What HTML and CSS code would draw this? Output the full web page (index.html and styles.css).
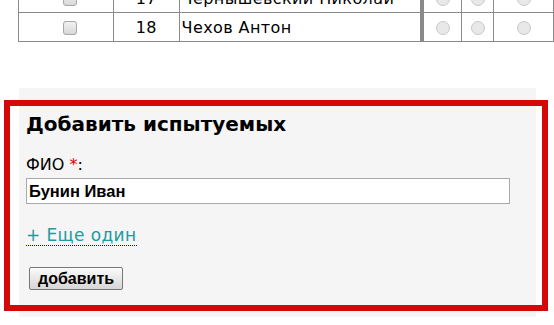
FILE: index.html
```html
<!DOCTYPE html>
<html lang="ru">
<head>
  <meta charset="UTF-8" />
  <title>Испытуемые</title>
  <link rel="stylesheet" href="styles.css">
</head>
<body>
  <table class="people">
    <tr>
      <td class="col-check"><span class="check"></span></td>
      <td class="col-num">17</td>
      <td class="col-name">Чернышевский Николай</td>
      <td class="col-radio first"><span class="radio"></span></td>
      <td class="col-radio second"><span class="radio"></span></td>
      <td class="col-radio last"><span class="radio"></span></td>
    </tr>
    <tr>
      <td class="col-check"><span class="check"></span></td>
      <td class="col-num">18</td>
      <td class="col-name">Чехов Антон</td>
      <td class="col-radio first"><span class="radio"></span></td>
      <td class="col-radio second"><span class="radio"></span></td>
      <td class="col-radio last"><span class="radio"></span></td>
    </tr>
  </table>

  <div class="add-block">
    <div class="highlight"></div>
    <h2>Добавить испытуемых</h2>
    <form class="add-form">
      <label class="field-label">ФИО <span class="req">*</span>:</label>
      <input type="text" class="field-input" value="Бунин Иван">
      <a href="#" class="more-link">+ Еще один</a>
      <button type="button" class="add-button">добавить</button>
    </form>
  </div>
</body>
</html>
```

FILE: styles.css
```css
body {
  margin: 0;
  font-family: "DejaVu Sans", Verdana, sans-serif;
  background-color: #fff;
  color: #000;
  overflow: hidden;
}

.people {
  border-collapse: collapse;
  margin: -17px 0 0 18px;
  font-size: 16px;
  letter-spacing: 0.4px;
}

.people td {
  border: 1px solid #8a8a8a;
  height: 28px;
  padding: 0;
}

.col-check {
  width: 88px;
  text-align: center;
  padding-left: 8px !important;
}

.col-num {
  width: 66px;
  text-align: center;
}

.col-name {
  width: 242px;
  padding-left: 2px !important;
}

.col-radio {
  text-align: center;
}

.col-radio.first {
  width: 37px;
  border-left: 4px solid #8a8a8a;
}

.col-radio.second {
  width: 32px;
}

.col-radio.last {
  width: 60px;
}

.check {
  display: inline-block;
  width: 12px;
  height: 12px;
  border: 1px solid #a8a8a8;
  border-radius: 3px;
  background: linear-gradient(#f2f2f2, #d8d8d8);
  vertical-align: middle;
}

.radio {
  display: inline-block;
  width: 12px;
  height: 12px;
  border: 1px solid #c8c8c8;
  border-radius: 50%;
  background: #e8e8e8;
  vertical-align: middle;
}

.add-block {
  position: relative;
  margin: 46px 18px 0 19px;
  height: 229px;
  background-color: #f5f5f5;
  padding: 0 7px;
}

.highlight {
  position: absolute;
  left: -15px;
  top: 12px;
  width: 532px;
  height: 199px;
  border: 6px solid #d50808;
  pointer-events: none;
}

h2 {
  margin: 0;
  padding-top: 24px;
  font-size: 20px;
  font-weight: bold;
  line-height: 24px;
}

.add-form {
  display: flex;
  flex-direction: column;
  align-items: flex-start;
}

.field-label {
  margin-top: 19px;
  font-size: 16px;
  line-height: 20px;
}

.req {
  color: #e00000;
}

.field-input {
  margin-top: 3px;
  width: 478px;
  height: 22px;
  padding: 1px 2px;
  border: 1px solid #aaa;
  background: #fff;
  font-family: "Liberation Sans", Arial, sans-serif;
  font-weight: bold;
  font-size: 16.5px;
  color: #000;
  box-sizing: content-box;
}

.more-link {
  margin-top: 21px;
  font-size: 17px;
  line-height: 20px;
  letter-spacing: 0.4px;
  color: #239a9e;
  text-decoration: none;
  border-bottom: 1px dotted #0000ee;
}

.add-button {
  margin: 21px 0 0 3px;
  height: 23px;
  padding: 0 8px;
  border: 1px solid #777;
  border-radius: 2px;
  background: linear-gradient(#fafafa, #d6d6d6);
  font-family: "Liberation Sans", Arial, sans-serif;
  font-weight: bold;
  font-size: 16px;
  color: #000;
}
```
